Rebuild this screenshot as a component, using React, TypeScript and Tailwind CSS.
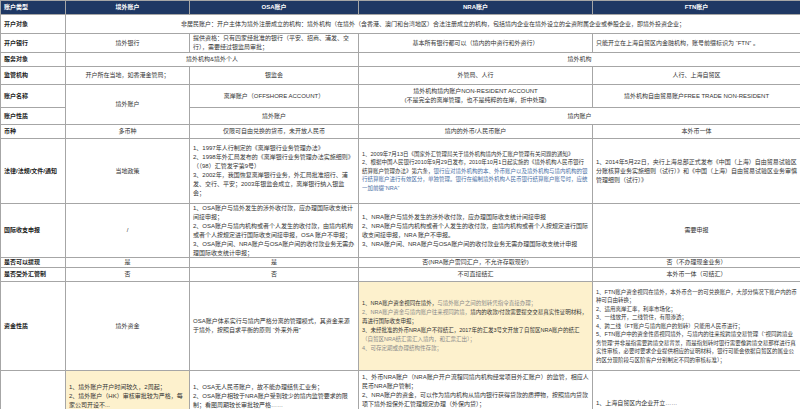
import React from "react";

const C = ({ cls, children, left }: { cls: string; children?: React.ReactNode; left?: boolean }) => (
  <div
    className={`border-r border-b border-[#a6a6a6] overflow-hidden flex items-center px-[3px] ${left ? "justify-start text-left" : "justify-center text-center"} ${cls}`}
  >
    <div>{children}</div>
  </div>
);

const H = ({ cls, children }: { cls: string; children: React.ReactNode }) => (
  <div className={`border-r border-b border-[#a6a6a6] flex items-center px-[3px] font-bold text-[#222] ${cls}`}>{children}</div>
);

const B = ({ children }: { children: React.ReactNode }) => <span className="text-[#4a6fa5]">{children}</span>;
const G = ({ children }: { children: React.ReactNode }) => <span className="text-[#8a8a8a]">{children}</span>;

export default function App() {
  return (
    <div
      className="w-[800px] h-[409px] overflow-hidden bg-white text-[6px] leading-[9px] text-[#333]"
      style={{ fontFamily: '"Liberation Sans", "Noto Sans CJK SC", sans-serif' }}
    >
      <div className="grid grid-cols-[65px_124px_169px_234px_208px] grid-rows-[14px_19px_19px_14px_18px_23px_17px_14px_65px_54px_10px_14px_89px_50px] border-l border-t border-[#a6a6a6]">
        <div className="col-start-1 row-start-1 bg-[#1f3864] text-white font-bold flex items-center px-[3px] border-r border-b border-[#a6a6a6]">账户类型</div>
        <div className="col-start-2 row-start-1 bg-[#1f3864] text-white font-bold flex items-center justify-center border-r border-b border-[#a6a6a6]">境外账户</div>
        <div className="col-start-3 row-start-1 bg-[#1f3864] text-white font-bold flex items-center justify-center border-r border-b border-[#a6a6a6]">OSA账户</div>
        <div className="col-start-4 row-start-1 bg-[#1f3864] text-white font-bold flex items-center justify-center border-r border-b border-[#a6a6a6]">NRA账户</div>
        <div className="col-start-5 row-start-1 bg-[#1f3864] text-white font-bold flex items-center justify-center border-r border-b border-[#a6a6a6]">FTN账户</div>

        <H cls="col-start-1 row-start-2">开户对象</H>
        <C cls="col-start-2 col-span-4 row-start-2">
          非居民账户：开户主体为境外注册成立的机构：境外机构（在境外（含香港、澳门和台湾地区）合法注册成立的机构，包括境内企业在境外设立的全资附属企业或参股企业，即境外投资企业；
        </C>

        <H cls="col-start-1 row-start-3">开户银行</H>
        <C cls="col-start-2 row-start-3">境外银行</C>
        <C cls="col-start-3 row-start-3" left>提供资格：只有四家经批准的银行（平安、招商、浦发、交行），需要经过银监局审批；</C>
        <C cls="col-start-4 row-start-3">基本所有银行都可以（境内的中资行和外资行）</C>
        <C cls="col-start-5 row-start-3" left>只能开立在上海自贸区内金融机构，账号前缀标识为 “FTN” 。</C>

        <H cls="col-start-1 row-start-4">服务对象</H>
        <C cls="col-start-2 col-span-2 row-start-4">境外机构&境外个人</C>
        <C cls="col-start-4 col-span-2 row-start-4">境外机构</C>

        <H cls="col-start-1 row-start-5">监管机构</H>
        <C cls="col-start-2 row-start-5">开户所在当地，如香港金管局；</C>
        <C cls="col-start-3 row-start-5">银监会</C>
        <C cls="col-start-4 row-start-5">外管局、人行</C>
        <C cls="col-start-5 row-start-5">人行、上海自贸区</C>

        <H cls="col-start-1 row-start-6">账户名称</H>
        <C cls="col-start-2 row-start-6 row-span-2">境外账户</C>
        <C cls="col-start-3 row-start-6">离岸账户（OFFSHORE ACCOUNT）</C>
        <C cls="col-start-4 row-start-6">境外机构境内账户NON-RESIDENT ACCOUNT<br />(不是完全的离岸管理，也不是纯粹的在岸，折中处理)</C>
        <C cls="col-start-5 row-start-6">境外机构自由贸易账户FREE TRADE NON-RESIDENT</C>
        <H cls="col-start-1 row-start-7">账户性质</H>
        <C cls="col-start-3 row-start-7">境外账户</C>
        <C cls="col-start-4 col-span-2 row-start-7">境内账户</C>

        <H cls="col-start-1 row-start-8">币种</H>
        <C cls="col-start-2 row-start-8">多币种</C>
        <C cls="col-start-3 row-start-8">仅限可自由兑换的货币，未开放人民币</C>
        <C cls="col-start-4 row-start-8">境内的外币/人民币账户</C>
        <C cls="col-start-5 row-start-8">本外币一体</C>

        <H cls="col-start-1 row-start-9">法律/法规/文件/通知</H>
        <C cls="col-start-2 row-start-9">当地政策</C>
        <C cls="col-start-3 row-start-9" left>
          1、1997年人行制定的《离岸银行业务管理办法》<br />
          2、1998年外汇局发布的《离岸银行业务管理办法实施细则》（（98）汇管发字第9号）<br />
          3、2002年，我国恢复离岸银行业务，外汇局批准招行、浦发、交行、平安；2003年银监会成立，离岸银行纳入银监会；
        </C>
        <C cls="col-start-4 row-start-9 text-[5.5px] leading-[8.5px]" left>
          1、2009年7月13日《国家外汇管理局关于境外机构境内外汇账户管理有关问题的通知》<br />
          2、根据中国人民银行2010年9月29日发布，2010年10月1日起实施的《境外机构人民币银行结算账户管理办法》第六条，<B>银行应对境外机构的本、外币账户以及境外机构与境内机构的银行结算账户进行有效区分，单独管理。银行在编制境外机构人民币银行结算账户账号时，应统一加前缀“NRA”</B>
        </C>
        <C cls="col-start-5 row-start-9" left>
          1、2014年5月22日，央行上海总部正式发布《中国（上海）自由贸易试验区分账核算业务实施细则（试行）》和《中国（上海）自由贸易试验区业务审慎管理细则（试行）》
        </C>

        <H cls="col-start-1 row-start-10">国际收支申报</H>
        <C cls="col-start-2 row-start-10">/</C>
        <C cls="col-start-3 row-start-10" left>
          1、OSA账户与境外发生的涉外收付款，应办理国际收支统计间接申报；<br />
          2、OSA账户与境内机构或者个人发生的收付款，由境内机构或者个人按规定进行国际收支间接申报，OSA 账户不申报；<br />
          3、OSA账户间、NRA账户与OSA账户间的收付款业务无需办理国际收支统计申报；
        </C>
        <C cls="col-start-4 row-start-10" left>
          1、NRA账户与境外发生的涉外收付款，应办理国际收支统计间接申报<br />
          2、NRA账户与境内机构或者个人发生的收付款，由境内机构或者个人按规定进行国际收支间接申报，NRA 账户不申报。<br />
          3、NRA账户间、NRA账户与OSA账户间的收付款业务无需办理国际收支统计申报
        </C>
        <C cls="col-start-5 row-start-10">需要申报</C>

        <H cls="col-start-1 row-start-11">是否可以提现</H>
        <C cls="col-start-2 row-start-11">是</C>
        <C cls="col-start-3 row-start-11">是</C>
        <C cls="col-start-4 row-start-11">否(NRA账户雷同汇户，不允许存取现钞)</C>
        <C cls="col-start-5 row-start-11">否（不办理现金业务）</C>

        <H cls="col-start-1 row-start-12">是否受外汇管制</H>
        <C cls="col-start-2 row-start-12">否</C>
        <C cls="col-start-3 row-start-12">否</C>
        <C cls="col-start-4 row-start-12">不可直接结汇</C>
        <C cls="col-start-5 row-start-12">本外币一体（可结汇）</C>

        <H cls="col-start-1 row-start-13">资金性质</H>
        <C cls="col-start-2 row-start-13">境外资金</C>
        <C cls="col-start-3 row-start-13" left>OSA账户体系实行与境内严格分离的管理模式，其资金来源于境外，按照自求平衡的原则 “外来外用”</C>
        <C cls="col-start-4 row-start-13 bg-[#fdf1cd] text-[5.5px] leading-[9px]" left>
          1、NRA账户资金视同在境外，<G>与境外账户之间的划转凭指令直接办理；</G><br />
          <G>2、NRA账户资金与境内账户往来视同跨境，</G>境内的收款/付款需要提交交易真实性证明材料，再进行国际收支申报；<br />
          3、未经批准的外币NRA账户不得结汇，2017年的汇发3号文开放了自贸区NRA账户的结汇<G>（自贸区NRA结汇需汇入境内，和汇票汇出）；</G><br />
          <G>4、可存定期或办理结构性存款；</G>
        </C>
        <C cls="col-start-5 row-start-13 text-[5.5px] leading-[8.5px]" left>
          1、FTN账户资金视同在境外，本外币合一的可兑换账户，大部分情况下账户内的币种可自由转换；<br />
          2、适用离岸汇率，利率市场化；<br />
          3、一线放开，二线管住，有限渗透；<br />
          4、跨二线（FT账户与境内账户的划转）只能用人民币进行；<br />
          5、FTN账户中的资金性质视同境外，与境内的往来按跨境交易管理（“视同跨境业务管理”并非是指需要跨境交易背景，而是指划转时银行需要像跨境交易那样进行真实性审核，必要时要求企业提供相应的证明材料，银行可能会依据自贸区的属业公约区分现阶段与区阶客户分别制定不同的审核标准）；
        </C>

        <div className="col-start-1 row-start-14 border-r border-[#a6a6a6]" />
        <C cls="col-start-2 row-start-14 bg-[#fdf1cd] !items-start pt-[12px]" left>
          1、境外账户开户时间较久，2周起；<br />
          2、境外账户（HK）审核审批较为严格，每家公司开设不...
        </C>
        <C cls="col-start-3 row-start-14 !items-start pt-[12px]" left>
          1、OSA无人民币账户，故不能办理结售汇业务；<br />
          2、OSA账户相较于NRA账户受到较少的境内监管要求的限制；看图周期较长审批较严格……
        </C>
        <C cls="col-start-4 row-start-14 !items-start pt-[2px]" left>
          1、外币NRA账户（NRA账户开户流程同境内机构经常项目外汇账户）的监管，相应人民币NRA账户管制；<br />
          2、NRA账户的资金，可以作为境内机构从境内银行获得贷款的质押物，按照境内贷款项下境外担保外汇管理规定办理（外保内贷）；
        </C>
        <C cls="col-start-5 row-start-14 !items-start pt-[28px]" left>1、上海自贸区内企业开立……</C>
      </div>
    </div>
  );
}
